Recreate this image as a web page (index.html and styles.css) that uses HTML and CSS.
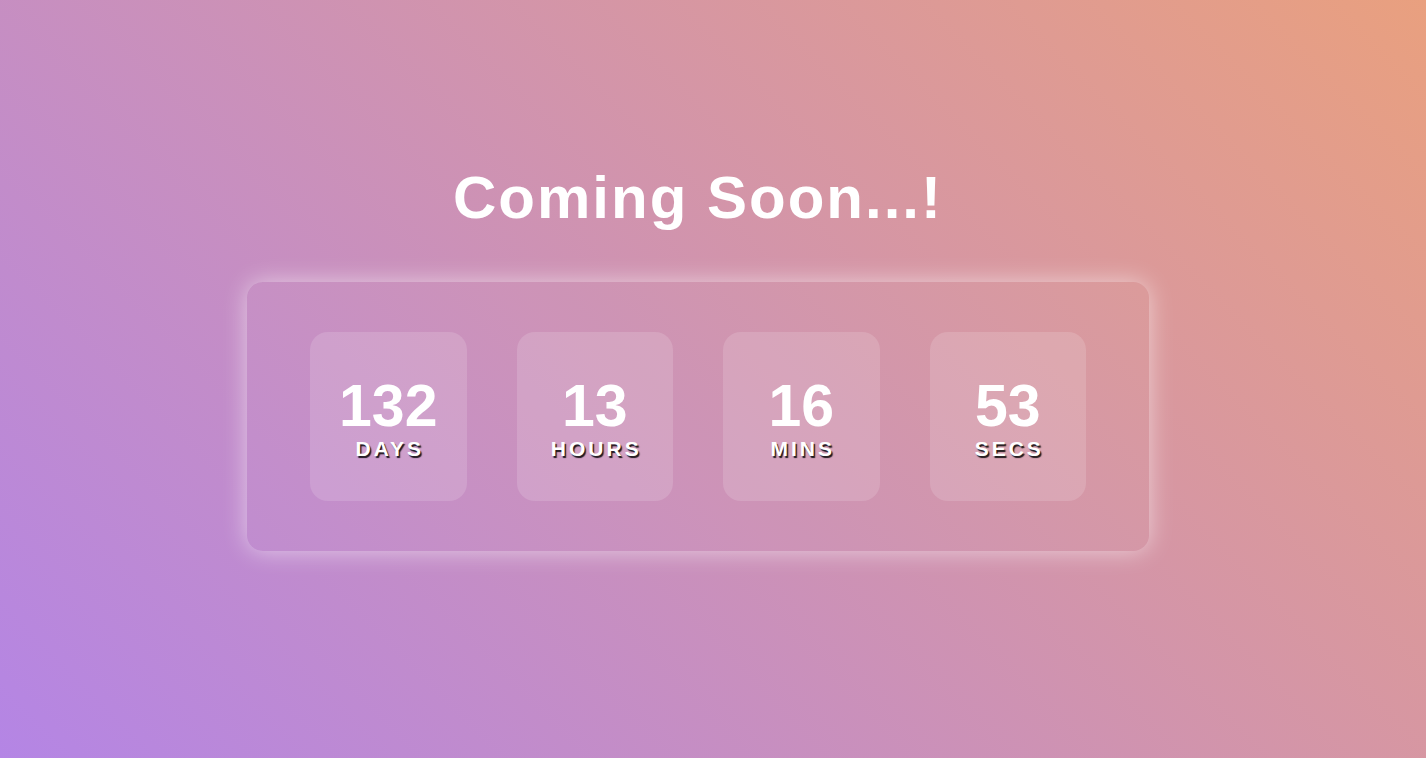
FILE: index.html
```html
<!DOCTYPE html>
<html>
<head>
<meta charset="utf-8">
<link rel="stylesheet" href="styles.css">
</head>
<body>
<main class="page">
  <h1 class="title">Coming Soon...!</h1>
  <section class="panel">
    <div class="unit"><span class="num">132</span><span class="label">DAYS</span></div>
    <div class="unit"><span class="num">13</span><span class="label">HOURS</span></div>
    <div class="unit"><span class="num">16</span><span class="label">MINS</span></div>
    <div class="unit"><span class="num">53</span><span class="label">SECS</span></div>
  </section>
</main>
</body>
</html>
```
FILE: styles.css
```css
html, body {
  margin: 0;
  height: 100%;
}
body {
  font-family: "Liberation Sans", Arial, sans-serif;
  background: linear-gradient(45deg, #b485e5, #e9a07f);
  color: #fff;
}
.page {
  height: 100%;
  display: flex;
  flex-direction: column;
  align-items: center;
  padding: 160px 30px 0 0;
  box-sizing: border-box;
}
.title {
  margin: 0;
  font-size: 60px;
  font-weight: bold;
  letter-spacing: 2px;
  line-height: 76px;
}
.panel {
  margin-top: 46px;
  width: 902px;
  height: 269px;
  box-sizing: border-box;
  padding: 50px 63px;
  display: flex;
  gap: 50px;
  border-radius: 16px;
  background: rgba(255, 255, 255, 0.02);
  box-shadow: 0 0 25px rgba(255, 255, 255, 0.55);
}
.unit {
  width: 157px;
  height: 169px;
  border-radius: 18px;
  background: rgba(255, 255, 255, 0.15);
  display: flex;
  flex-direction: column;
  align-items: center;
  justify-content: center;
}
.num {
  font-size: 59px;
  font-weight: bold;
  line-height: 60px;
  margin-top: 4px;
}
.label {
  font-size: 21px;
  font-weight: bold;
  letter-spacing: 3px;
  padding-left: 3px;
  line-height: 24px;
  margin-top: 1px;
  text-shadow: 1.5px 1.5px 1px rgba(0, 0, 0, 0.85);
}
```
